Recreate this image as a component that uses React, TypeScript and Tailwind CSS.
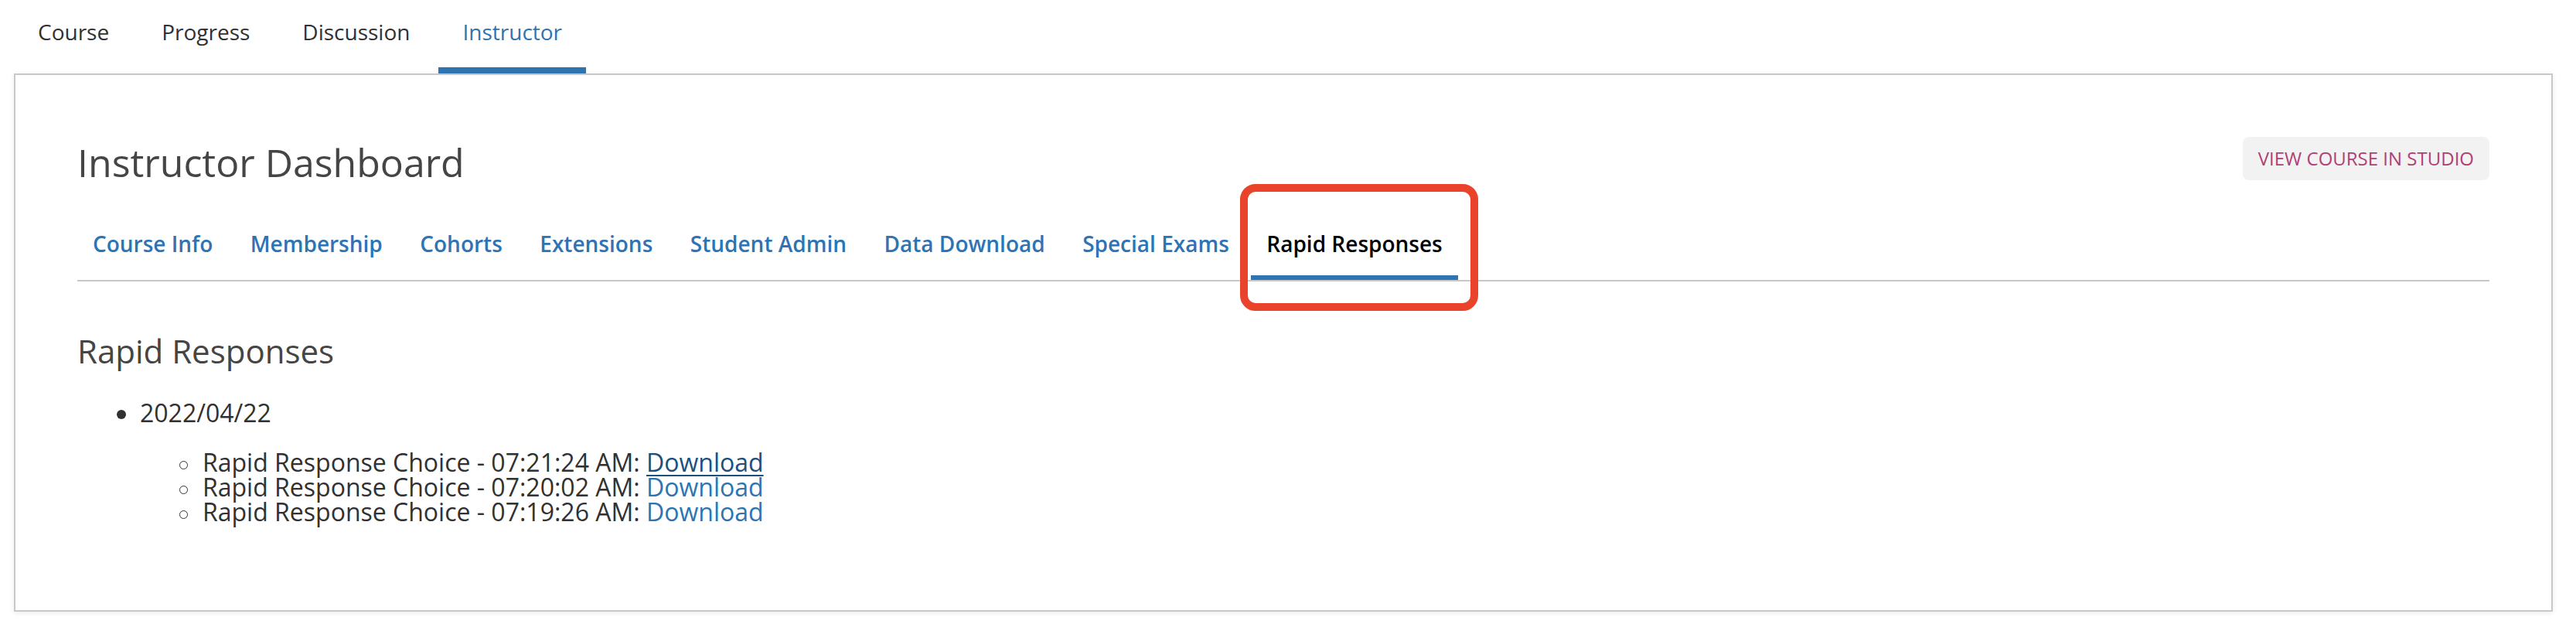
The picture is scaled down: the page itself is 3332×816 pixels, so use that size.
const topTabs = ["Course", "Progress", "Discussion", "Instructor"];
const dashTabs = [
  "Course Info",
  "Membership",
  "Cohorts",
  "Extensions",
  "Student Admin",
  "Data Download",
  "Special Exams",
  "Rapid Responses",
];
const responses = [
  { time: "07:21:24 AM", focused: true },
  { time: "07:20:02 AM", focused: false },
  { time: "07:19:26 AM", focused: false },
];

const App = () => {
  return (
    <main className="relative w-[3332px] h-[816px] bg-white font-['Open_Sans',sans-serif]">
      <nav className="flex pl-[18px]">
        {topTabs.map((tab) => (
          <a
            key={tab}
            className={`mr-[6px] px-[31px] pt-[21px] pb-[26px] border-b-[8px] text-[28px] leading-[40px] ${
              tab === "Instructor"
                ? "border-[#2e74b1] text-[#2e74b1]"
                : "border-transparent text-[#313131]"
            }`}
          >
            {tab}
          </a>
        ))}
      </nav>

      <section className="ml-[18px] w-[3284px] border-2 border-[#c8c8c8] px-[80px] pt-[79px] pb-[111px] shadow-[0_2px_6px_rgba(0,0,0,0.08)]">
        <div className="flex justify-between items-start">
          <h1 className="text-[50px] leading-[68px] text-[#454545]">
            Instructor Dashboard
          </h1>
          <button className="mt-px flex items-center h-[56px] px-[20px] rounded-[8px] bg-[#f2f2f2] text-[24px] text-[#b03f74]">
            VIEW COURSE IN STUDIO
          </button>
        </div>

        <ul className="mt-[31px] flex gap-[8.5px] border-b-2 border-[#c8c8c8]">
          {dashTabs.map((tab) => (
            <li
              key={tab}
              className={`px-[20px] pt-[20px] pb-[21px] border-b-[6px] text-[28px] leading-[40px] font-semibold ${
                tab === "Rapid Responses"
                  ? "border-[#2e74b1] text-black"
                  : "border-transparent text-[#2e73b3]"
              }`}
            >
              {tab}
            </li>
          ))}
        </ul>

        <h2 className="mt-[61px] text-[42px] leading-[58px] text-[#454545]">
          Rapid Responses
        </h2>

        <div className="mt-[27px] pl-[51px] text-[32px] text-[#313131]">
          <div className="flex items-start leading-[48px]">
            <span className="mt-[20px] mr-[18px] w-[12px] h-[12px] rounded-full bg-[#313131]" />
            <span>2022/04/22</span>
          </div>
          <ul className="mt-[24px] pl-[81px] flex flex-col">
            {responses.map((item) => (
              <li key={item.time} className="flex items-start leading-[32px]">
                <span className="mt-[14px] mr-[19px] w-[11px] h-[11px] rounded-full border-[1.5px] border-[#313131]" />
                <span>
                  Rapid Response Choice - {item.time}:{" "}
                  <a
                    className={
                      item.focused
                        ? "text-[#1d4f7c] underline decoration-2 underline-offset-4"
                        : "text-[#2e74b1]"
                    }
                  >
                    Download
                  </a>
                </span>
              </li>
            ))}
          </ul>
        </div>
      </section>

      <div className="absolute left-[1604px] top-[238px] w-[308px] h-[164px] rounded-[20px] border-[10px] border-[#ea432b]" />
    </main>
  );
};

export default App;
